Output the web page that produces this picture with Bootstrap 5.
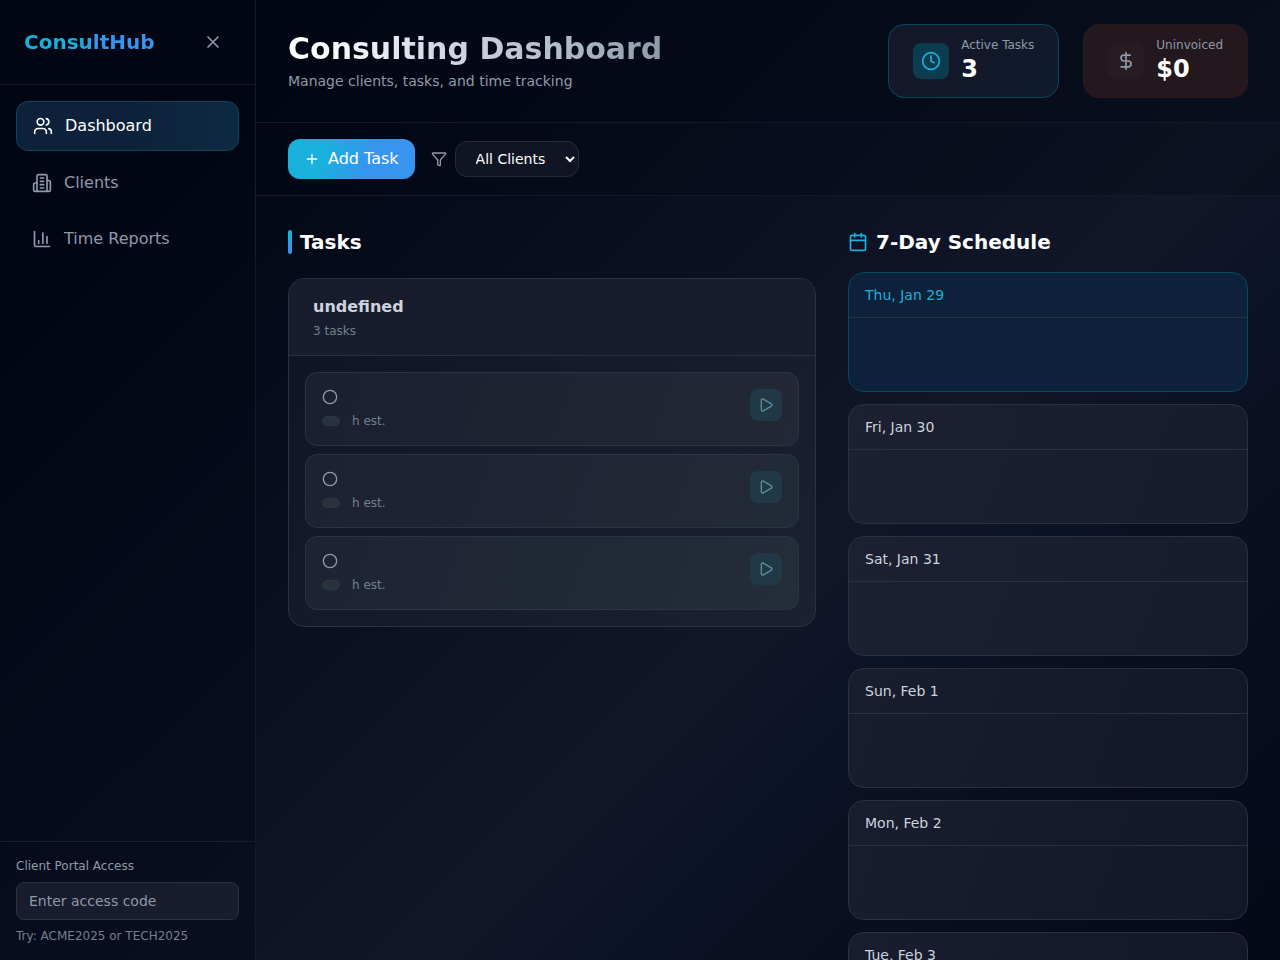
<!DOCTYPE html>
<html lang="en">
<head>
<meta charset="utf-8">
<meta name="viewport" content="width=device-width, initial-scale=1">
<title>ConsultHub</title>
<link href="https://cdn.jsdelivr.net/npm/bootstrap@5.3.0/dist/css/bootstrap.min.css" rel="stylesheet">
<style>
  body { font-family: "DejaVu Sans", sans-serif; font-size: 16px; line-height: 1.5; color: #fff; background: #020617; }
  svg { fill: none; stroke: currentColor; stroke-width: 2; stroke-linecap: round; stroke-linejoin: round; display: block; flex: none; }
  .i20 { width: 20px; height: 20px; }
  .i16 { width: 16px; height: 16px; }
  .app-shell { background: linear-gradient(135deg, #020512 0, #030715 250px, #070c1c 480px, #0b1123 700px, #101628 920px, #111729 980px, #0c1225 1130px, #070d1c 1350px, #040918 1584px); }
  .side-bar { width: 256px; border-right: 1px solid #141a29; background: rgba(2,6,20,.35); }
  .top-bar { background: rgba(2,5,18,.5); }
  .tool-bar { background: rgba(2,5,18,.3); }
  .line-b { border-bottom: 1px solid #131928; }
  .line-t { border-top: 1px solid #171e2d; }
  .t12 { font-size: 12px; line-height: 16px; }
  .t14 { font-size: 14px; line-height: 20px; }
  .t20 { font-size: 20px; line-height: 28px; font-weight: 700; }
  .t24 { font-size: 24px; line-height: 32px; font-weight: 700; }
  .muted { color: #8e9aa9; }
  .dim { color: #71808f; }
  .soft { color: #cbd3df; }
  .sky { color: #1ab0dc; }
  .logo-text { background: linear-gradient(90deg, #1ab0dc 42%, #3794ef 58%); -webkit-background-clip: text; background-clip: text; color: transparent; }
  .title-text { font-size: 30px; line-height: 36px; font-weight: 700; background: linear-gradient(90deg, #fff 8%, #d3dae4 40%, #b0bbc8 75%, #8e99a8 100%); -webkit-background-clip: text; background-clip: text; color: transparent; }
  .side-link { padding: 12px 16px; gap: 12px; border-radius: 12px; color: #8e9aa9; text-decoration: none; }
  .side-link.on { color: #fff; border: 1px solid #0b465b; background: linear-gradient(90deg, #0d213a 50%, #0d2a42); }
  .code-input { height: 38px; padding: 8px 12px; font-size: 14px; line-height: 20px; border-radius: 8px; border: 1px solid #2a3240; background: #181c2c; color: #fff; }
  .code-input::placeholder { color: #8e9aa9; opacity: 1; }
  .stat-box { padding: 12px 24px; gap: 12px; border-radius: 16px; border: 1px solid #0b465b; background: linear-gradient(135deg, #13182a 45%, #0f1b2e); }
  .stat-box.warm { border-color: #2b1a1c; background: #22181d; }
  .stat-icon { padding: 8px; border-radius: 8px; background: #0c3c50; }
  .warm .stat-icon { background: #271c21; }
  .add-btn { height: 40px; padding: 8px 16px; gap: 8px; border: 0; border-radius: 12px; color: #fff; background: linear-gradient(110deg, #1ab0dc 30%, #3794ef 64%); }
  .client-select { width: 124px; height: 36px; padding: 8px 16px; border: 1px solid #242c3b; border-radius: 12px; background: #101524; color: #fff; font-size: 14px; line-height: 18px; }
  .work-grid { display: grid; grid-template-columns: 1fr 400px; gap: 32px; padding: 32px; }
  .accent-bar { width: 4px; height: 24px; border-radius: 4px; background: linear-gradient(#1ab0dc 35%, #3794ef 65%); }
  .group-box { margin-top: 22px; border: 1px solid #2a3140; border-radius: 16px; overflow: hidden; background: linear-gradient(135deg, #0e1425, #161b2c 50%, #1b2032); }
  .group-head { padding: 16px 24px; border-bottom: 1px solid #2a3240; background: linear-gradient(90deg, #181c2d, #171c2e); }
  .task-row { height: 74px; padding: 16px; border: 1px solid #2b3542; border-radius: 12px; }
  .tag-empty { width: 18px; height: 10px; border-radius: 5px; border: 1px solid #2b3843; background: #29323b; }
  .play-btn { width: 32px; height: 32px; padding: 8px; border: 0; border-radius: 8px; background: #213946; color: #5d8a9c; }
  .day-box { height: 120px; flex: none; border: 1px solid #2a3140; border-radius: 16px; background: linear-gradient(110deg, #1c2031, #171b2c); }
  .day-box.far { background: linear-gradient(110deg, #191d2e, #121828); }
  .day-head { padding: 12px 16px; border-bottom: 1px solid #2a3240; }
  .day-box.today { border-color: #0b465b; background: #0d223a; }
  .today .day-head { border-color: #1e3345; }
</style>
</head>
<body>
<div class="app-shell d-flex vh-100 overflow-hidden">
  <aside class="side-bar d-flex flex-column flex-shrink-0">
    <div class="line-b d-flex align-items-center justify-content-between p-4">
      <div class="logo-text t20">ConsultHub</div>
      <div class="p-2 muted"><svg class="i20" viewBox="0 0 24 24"><path d="M18 6 6 18M6 6l12 12"/></svg></div>
    </div>
    <nav class="p-3 d-flex flex-column gap-2 flex-grow-1">
      <a class="side-link on d-flex align-items-center" href="#"><svg class="i20" viewBox="0 0 24 24"><path d="M16 21v-2a4 4 0 0 0-4-4H6a4 4 0 0 0-4 4v2"/><circle cx="9" cy="7" r="4"/><path d="M22 21v-2a4 4 0 0 0-3-3.87M16 3.13a4 4 0 0 1 0 7.75"/></svg><span>Dashboard</span></a>
      <a class="side-link d-flex align-items-center" href="#"><svg class="i20" viewBox="0 0 24 24"><path d="M6 22V4a2 2 0 0 1 2-2h8a2 2 0 0 1 2 2v18Z"/><path d="M6 12H4a2 2 0 0 0-2 2v6a2 2 0 0 0 2 2h2"/><path d="M18 9h2a2 2 0 0 1 2 2v9a2 2 0 0 1-2 2h-2"/><path d="M10 6h4M10 10h4M10 14h4M10 18h4"/></svg><span>Clients</span></a>
      <a class="side-link d-flex align-items-center" href="#"><svg class="i20" viewBox="0 0 24 24"><path d="M3 3v16a2 2 0 0 0 2 2h16M18 17V9M13 17V5M8 17v-3"/></svg><span>Time Reports</span></a>
    </nav>
    <div class="line-t p-3">
      <label class="t12 muted d-block mb-2" for="code">Client Portal Access</label>
      <input class="code-input d-block w-100" id="code" placeholder="Enter access code">
      <div class="t12 dim mt-2">Try: ACME2025 or TECH2025</div>
    </div>
  </aside>

  <main class="flex-grow-1 overflow-hidden">
    <header class="top-bar line-b d-flex align-items-center justify-content-between py-4 px-4">
      <div class="ps-2">
        <h1 class="title-text mb-1">Consulting Dashboard</h1>
        <p class="t14 muted mb-0">Manage clients, tasks, and time tracking</p>
      </div>
      <div class="d-flex gap-4 pe-2">
        <div class="stat-box d-flex align-items-center">
          <div class="stat-icon sky"><svg class="i20" viewBox="0 0 24 24"><circle cx="12" cy="12" r="10"/><path d="M12 6v6l4 2"/></svg></div>
          <div><div class="t12 muted">Active Tasks</div><div class="t24">3</div></div>
        </div>
        <div class="stat-box warm d-flex align-items-center">
          <div class="stat-icon muted"><svg class="i20" viewBox="0 0 24 24"><path d="M12 2v20M17 5H9.5a3.5 3.5 0 0 0 0 7h5a3.5 3.5 0 0 1 0 7H6"/></svg></div>
          <div><div class="t12 muted">Uninvoiced</div><div class="t24">$0</div></div>
        </div>
      </div>
    </header>

    <div class="tool-bar line-b d-flex align-items-center gap-3 py-3 px-4">
      <button class="add-btn d-flex align-items-center ms-2"><svg class="i16" viewBox="0 0 24 24"><path d="M5 12h14M12 5v14"/></svg>Add Task</button>
      <div class="d-flex align-items-center gap-2 muted">
        <svg class="i16" viewBox="0 0 24 24"><path d="M10 20a1 1 0 0 0 .553.895l2 1A1 1 0 0 0 14 21v-7a2 2 0 0 1 .517-1.341L21.74 4.67A1 1 0 0 0 21 3H3a1 1 0 0 0-.742 1.67l7.225 7.989A2 2 0 0 1 10 14z"/></svg>
        <select class="client-select"><option>All Clients</option></select>
      </div>
    </div>

    <div class="work-grid">
      <section>
        <h2 class="t20 d-flex align-items-center gap-2 mb-0"><span class="accent-bar"></span>Tasks</h2>
        <div class="group-box">
          <div class="group-head">
            <div class="fw-bold soft">undefined</div>
            <div class="t12 dim mt-1">3 tasks</div>
          </div>
          <div class="p-3 d-flex flex-column gap-2" id="tasks"></div>
        </div>
      </section>
      <section>
        <h2 class="t20 d-flex align-items-center gap-2 mb-3"><svg class="i20 sky" viewBox="0 0 24 24"><path d="M8 2v4M16 2v4M3 10h18"/><rect x="3" y="4" width="18" height="18" rx="2"/></svg>7-Day Schedule</h2>
        <div class="d-flex flex-column" style="gap:12px" id="days"></div>
      </section>
    </div>
  </main>
</div>
<script src="https://cdn.jsdelivr.net/npm/bootstrap@5.3.0/dist/js/bootstrap.bundle.min.js"></script>
<script>
  const shades = [['#1b1f30', '#222935'], ['#1d2132', '#232a37'], ['#1e2333', '#242d38']];
  document.getElementById('tasks').innerHTML = shades.map(s => `
    <div class="task-row d-flex justify-content-between align-items-start" style="background:linear-gradient(110deg,${s[0]},${s[1]})">
      <div>
        <svg class="i16 muted" viewBox="0 0 24 24"><circle cx="12" cy="12" r="10"/></svg>
        <div class="d-flex align-items-center mt-2 t12 dim" style="gap:12px"><span class="tag-empty"></span>h est.</div>
      </div>
      <button class="play-btn"><svg class="i16" viewBox="0 0 24 24"><path d="M5 5a2 2 0 0 1 3.008-1.728l11.997 6.998a2 2 0 0 1 .003 3.458l-12 7A2 2 0 0 1 5 19z"/></svg></button>
    </div>`).join('');
  document.getElementById('days').innerHTML =
    ['Thu, Jan 29', 'Fri, Jan 30', 'Sat, Jan 31', 'Sun, Feb 1', 'Mon, Feb 2', 'Tue, Feb 3', 'Wed, Feb 4'].map((d, i) =>
    `<div class="day-box${i ? (i > 2 ? ' far' : '') : ' today'}"><div class="day-head t14 ${i ? 'soft' : 'sky'}">${d}</div></div>`).join('');
</script>
</body>
</html>
